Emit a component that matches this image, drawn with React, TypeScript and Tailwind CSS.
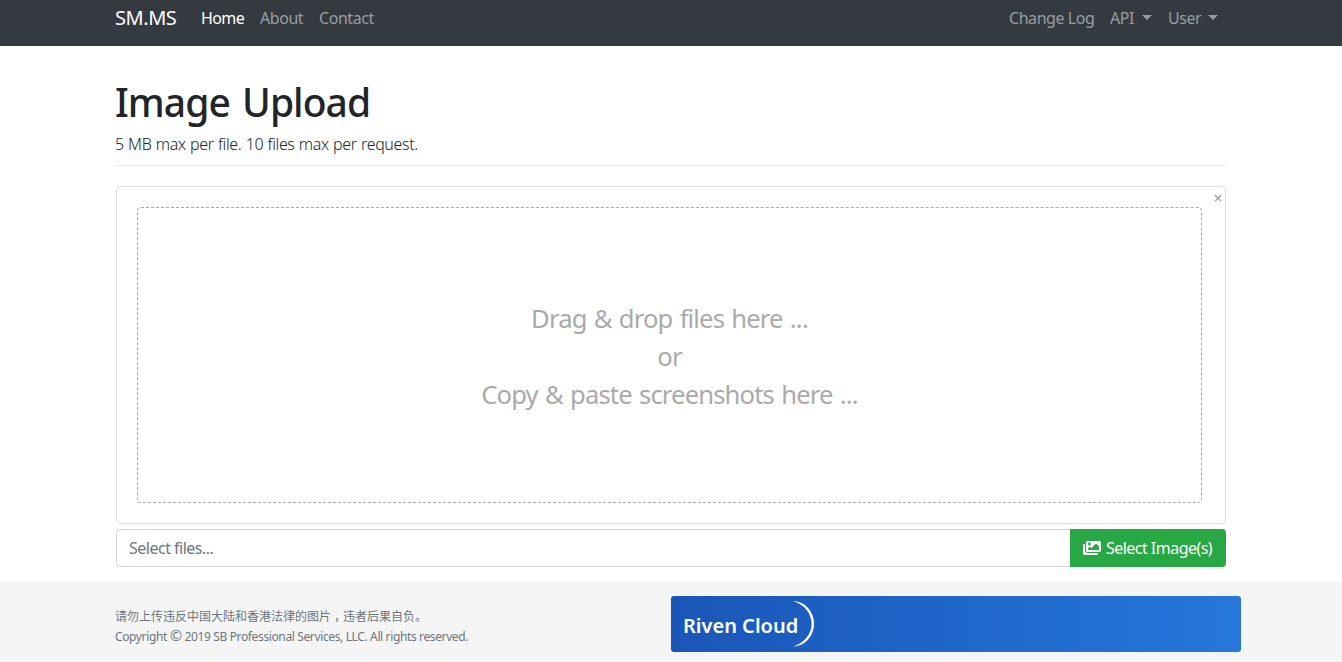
import React from "react";

function Caret({ className }: { className: string }) {
  return (
    <span className={`mt-[-2px] inline-block border-x-[5px] border-t-[5px] border-x-transparent border-t-[#9a9da0] ${className}`} />
  );
}

function Navbar() {
  return (
    <nav className="h-[46px] bg-[#343a40]">
      <div className="mx-auto flex h-9 w-[1110px] items-center whitespace-nowrap text-[16px] leading-6 tracking-[-0.45px] text-[#9a9da0]">
        <a className="-ml-px w-[86px] text-[20px] text-white">SM.MS</a>
        <a className="w-[59px] tracking-[-0.6px] text-white">Home</a>
        <a className="w-[59px]">About</a>
        <a>Contact</a>
        <a className="ml-auto w-[101px]">Change Log</a>
        <a className="flex w-[58px] items-center">API<Caret className="ml-2" /></a>
        <a className="flex w-[58px] items-center">User<Caret className="ml-[7px]" /></a>
      </div>
    </nav>
  );
}

function ImagesIcon() {
  return (
    <svg viewBox="0 0 576 512" className="h-4 w-[18px]" fill="currentColor">
      <path d="M480 416v16c0 26.510-21.490 48-48 48H48c-26.510 0-48-21.490-48-48V176c0-26.510 21.490-48 48-48h16v208c0 44.112 35.888 80 80 80h336zm96-80V80c0-26.510-21.490-48-48-48H144c-26.510 0-48 21.490-48 48v256c0 26.510 21.490 48 48 48h384c26.510 0 48-21.490 48-48zM256 128c0 26.510-21.490 48-48 48s-48-21.490-48-48 21.490-48 48-48 48 21.490 48 48zm-96 144l55.515-55.515c4.686-4.686 12.284-4.686 16.971 0L272 256l135.515-135.515c4.686-4.686 12.284-4.686 16.971 0L512 208v112H160v-48z" />
    </svg>
  );
}

function Uploader() {
  return (
    <section>
      <div className="relative h-[338px] rounded-[4px] border border-[#dddddd] py-5 pr-[23px] pl-5">
        <button className="absolute top-[3px] right-[2px] h-4 w-[10px] text-center text-[16px] leading-4 text-[#999999]">×</button>
        <div className="flex h-[296px] flex-col items-center justify-center rounded-[4px] border border-dashed border-[#aaaaaa] pt-[4px] text-center text-[25.6px] leading-[38px] tracking-[-0.85px] text-[#aaaaaa] [word-spacing:1.4px]">
          <p>Drag &amp; drop files here ...</p>
          <p>or</p>
          <p>Copy &amp; paste screenshots here ...</p>
        </div>
      </div>
      <div className="mt-[5px] flex h-[38px]">
        <div className="flex flex-1 items-center rounded-l-[4px] border border-r-0 border-[#ced4da] pl-3 text-[16px] tracking-[-0.5px] text-[#6c757d]">
          <span>Select files...</span>
        </div>
        <button className="flex w-[156px] items-center gap-[5px] whitespace-nowrap rounded-r-[4px] bg-[#28a745] pl-[13px] text-[16px] tracking-[-0.53px] text-white">
          <ImagesIcon />
          <span>Select Image(s)</span>
        </button>
      </div>
    </section>
  );
}

function Footer() {
  return (
    <footer className="h-[81px] bg-[#f5f5f5]">
      <div className="mx-auto flex w-[1110px]">
        <div className="-ml-px w-[556px] pt-[26px] text-[12px] leading-5 text-[#6c757d]">
          <p>请勿上传违反中国大陆和香港法律的图片<span className="ml-[3px] tracking-[-3px]">，</span>违者后果自负。</p>
          <p className="tracking-[-0.37px]">
            Copyright <span className="font-['Noto_Sans_CJK_SC'] text-[15px] leading-none">©</span> 2019 SB Professional Services, LLC. All rights reserved.
          </p>
        </div>
        <a className="mt-[15px] mr-[-15px] flex h-14 w-[570px] shrink-0 items-center rounded-[3px] bg-linear-to-r from-[#1a56b8] to-[#2677dc] pl-3 text-white">
          <span className="w-[110px] whitespace-nowrap pt-[3px] text-[20px] font-semibold">Riven Cloud</span>
          <svg viewBox="0 0 24 48" className="h-12 w-6" fill="currentColor">
            <path d="M0 1A22.300 22.700 0 0 1 0 46.500A29 24 0 0 0 0 1Z" transform="scale(0.94 1)" />
          </svg>
        </a>
      </div>
    </footer>
  );
}

export default function App() {
  return (
    <div className="h-[662px] overflow-hidden bg-white font-['Noto_Sans','Noto_Sans_CJK_SC',sans-serif] text-[#212529]">
      <Navbar />
      <main className="mx-auto h-[535px] w-[1110px] pt-8">
        <h1 className="-ml-px text-[39px] leading-12 font-[550] tracking-[-0.95px] [word-spacing:3px]">Image Upload</h1>
        <p className="-ml-px mt-[6px] text-[16px] leading-6 font-[350] tracking-[-0.35px] [word-spacing:0.5px]">5 MB max per file. 10 files max per request.</p>
        <hr className="mt-[9px] mb-5 border-[#e9e9e9]" />
        <Uploader />
      </main>
      <Footer />
    </div>
  );
}
